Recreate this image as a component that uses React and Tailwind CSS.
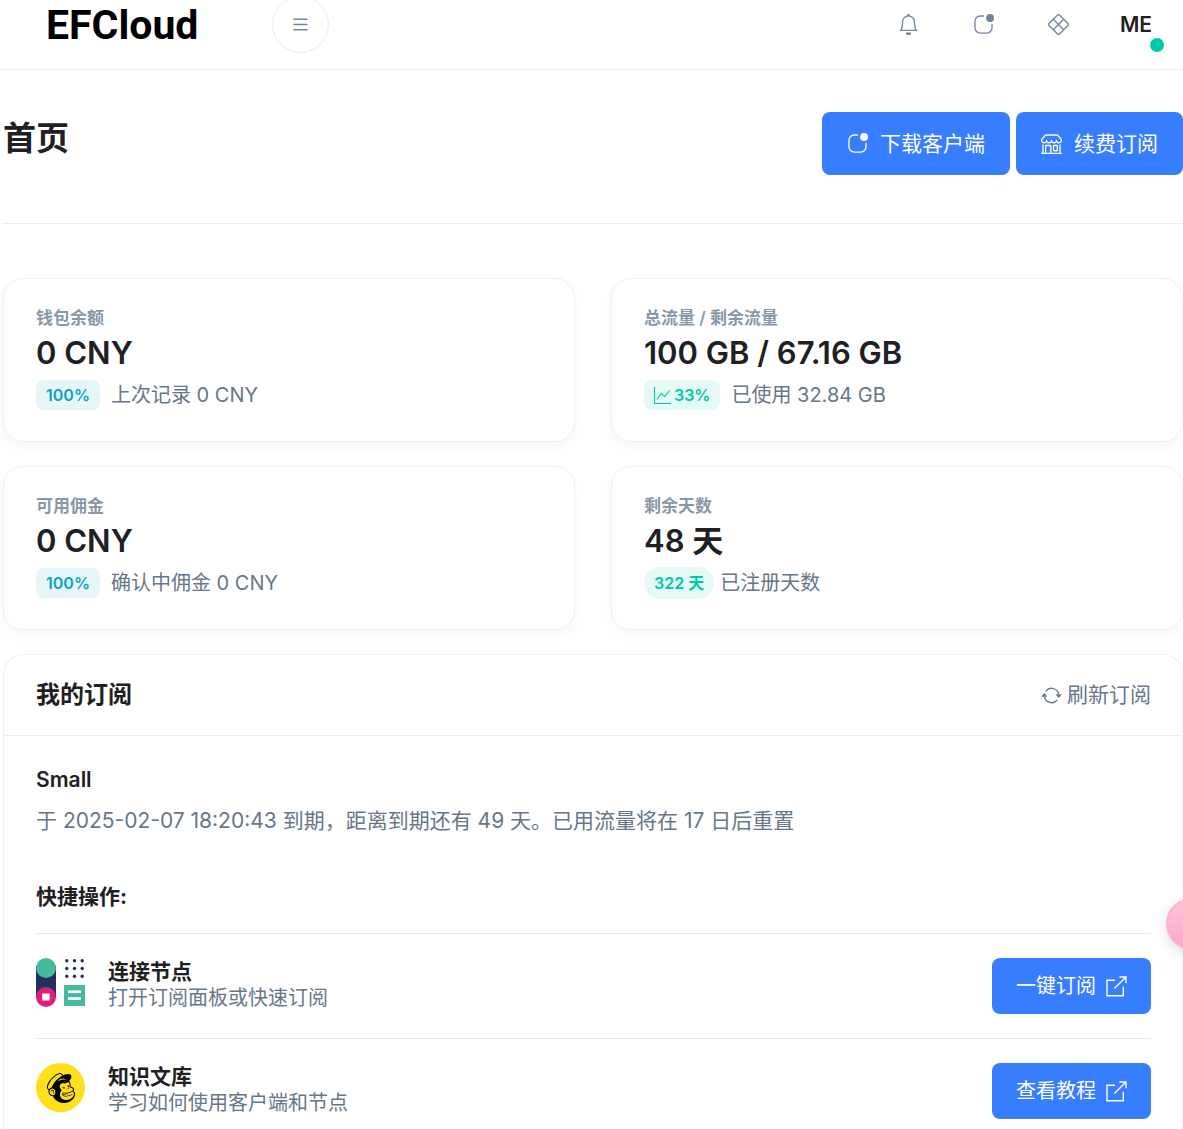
import React from "react";
import {
  BsAppIndicator,
  BsArrowRepeat,
  BsBell,
  BsGraphUp,
  BsList,
  BsShop,
  BsXDiamond,
} from "react-icons/bs";
import { SiMailchimp } from "react-icons/si";

function Card({ label, value, children }) {
  return (
    <section className="rounded-[20px] border border-[#eeeff8] bg-white px-8 pt-[25px] pb-[31px] shadow-[0_6px_16px_rgba(0,0,0,0.035)]">
      <h2 className="text-[17px] leading-7 font-semibold text-[#8898a9]">{label}</h2>
      <p className="text-[31px] leading-[42px] font-semibold">{value}</p>
      <div className="mt-[6px] flex h-[30px] items-center text-[20px] leading-[30px] text-[#677788]">{children}</div>
    </section>
  );
}

function Badge({ className, children }) {
  return (
    <span className={"flex items-center gap-[3px] px-[10px] text-[16px] font-semibold " + className}>{children}</span>
  );
}

function OpenIcon() {
  return (
    <svg viewBox="0 0 21 21" className="size-[21px]" fill="none" stroke="currentColor" strokeWidth="1.4" aria-hidden="true">
      <path d="M9 4.2H1V19.8h16.3v-9" />
      <path d="M8.4 12.4 20 1M13.4 1H20v6.2" />
    </svg>
  );
}

function PanelLogo() {
  const dots = [2.8, 10.5, 18.2];
  return (
    <svg viewBox="0 0 49 49" className="size-[49px] shrink-0" aria-hidden="true">
      <rect x="0" y="8" width="20" height="32" fill="#21305f" />
      <circle cx="10" cy="10" r="10" fill="#45ba9d" />
      <circle cx="10" cy="39" r="10" fill="#e01e79" />
      <rect x="6.2" y="35.5" width="7.4" height="7" fill="#fff" />
      {dots.map((y) =>
        dots.map((x) => <circle key={x + "-" + y} cx={x + 28} cy={y} r="1.7" fill="#21305f" />)
      )}
      <rect x="28" y="27" width="21" height="21" fill="#45ba9d" />
      <rect x="32" y="32.4" width="13" height="2.7" fill="#fff" />
      <rect x="32" y="39.2" width="13" height="2.7" fill="#fff" />
    </svg>
  );
}

function ActionRow({ logo, title, text, action }) {
  return (
    <li className="flex items-start justify-between border-t border-[#e7e9f3] py-6">
      <div className="flex items-start gap-[23px]">
        {logo}
        <div>
          <h4 className="text-[21px] leading-[27px] font-bold">{title}</h4>
          <p className="text-[20px] leading-[26px] text-[#677788]">{text}</p>
        </div>
      </div>
      <a href="#" className="flex h-14 items-center gap-[10px] rounded-lg bg-[#377dff] px-6 text-[20px] text-white">
        {action}
        <OpenIcon />
      </a>
    </li>
  );
}

export default function App() {
  return (
    <div className="flex min-h-screen flex-col bg-white font-['Inter','Noto_Sans_CJK_SC',sans-serif] text-[#1e2022]">
      <header className="flex h-[70px] items-center border-b border-[#ebecf5] pr-[31px] pb-5 pl-[46px]">
        <a href="#" className="w-[226px] font-['Roboto',sans-serif] text-[41px] leading-[48px] font-bold text-black">
          EFCloud
        </a>
        <button aria-label="菜单" className="flex size-[57px] shrink-0 items-center justify-center rounded-full border border-[#ebecf5] text-[#71869d]">
          <BsList className="size-[21px]" />
        </button>
        <nav className="ml-auto flex items-center gap-[51px]">
          <div className="flex items-center gap-[54px] text-[#71869d]">
            <button aria-label="通知"><BsBell className="size-[21px]" /></button>
            <button aria-label="客户端"><BsAppIndicator className="size-[21px]" /></button>
            <button aria-label="应用"><BsXDiamond className="size-[21px]" /></button>
          </div>
          <button className="relative text-[21px] leading-[30px] font-semibold">
            ME
            <span className="absolute -right-3 -bottom-3 size-[14px] rounded-full bg-[#00c9a7]" />
          </button>
        </nav>
      </header>

      <main className="flex grow flex-col pl-[3px]">
        <div className="flex items-start justify-between border-b border-[#ebecf5] pt-[42px] pb-12">
          <h1 className="text-[33px] leading-[52px] font-bold">首页</h1>
          <div className="flex gap-[6px] text-[21px] text-white">
            <a href="#" className="flex h-[63px] items-center gap-3 rounded-lg bg-[#377dff] px-[25px]">
              <BsAppIndicator className="size-[21px]" />
              下载客户端
            </a>
            <a href="#" className="flex h-[63px] items-center gap-3 rounded-lg bg-[#377dff] px-[25px]">
              <BsShop className="size-[21px]" />
              续费订阅
            </a>
          </div>
        </div>

        <div className="mt-[54px] grid grid-cols-2 gap-x-9 gap-y-6">
          <Card label="钱包余额" value="0 CNY">
            <Badge className="mr-[11px] h-[30px] rounded-lg bg-[#e6f5f8] text-[#09a5be]">100%</Badge>
            上次记录 0 CNY
          </Card>
          <Card label="总流量 / 剩余流量" value="100 GB / 67.16 GB">
            <Badge className="mr-[11px] h-[30px] rounded-lg bg-[#e5f9f6] text-[#00c9a7]">
              <BsGraphUp className="size-[17px]" />
              33%
            </Badge>
            已使用 32.84 GB
          </Card>
          <Card label="可用佣金" value="0 CNY">
            <Badge className="mr-[11px] h-[30px] rounded-lg bg-[#e6f5f8] text-[#09a5be]">100%</Badge>
            确认中佣金 0 CNY
          </Card>
          <Card label="剩余天数" value="48 天">
            <Badge className="mr-[6px] h-8 rounded-full bg-[#e5f9f6] text-[#00c9a7]">322 天</Badge>
            已注册天数
          </Card>
        </div>

        <section className="mt-6 grow rounded-t-[20px] border border-b-0 border-[#eeeff8] bg-white">
          <div className="flex h-[81px] items-center justify-between border-b border-[#ebecf5] pr-[31px] pl-8">
            <h2 className="text-[24px] font-bold">我的订阅</h2>
            <button className="flex items-center gap-[5px] text-[21px] text-[#677788]">
              <BsArrowRepeat className="size-[21px]" />
              刷新订阅
            </button>
          </div>
          <div className="pt-7 pr-[31px] pl-8">
            <h3 className="text-[21px] leading-8 font-semibold">Small</h3>
            <p className="mt-2 text-[21px] leading-[34px] text-[#677788]">
              于 2025-02-07 18:20:43 到期，距离到期还有 49 天。已用流量将在 17 日后重置
            </p>
            <h3 className="mt-[43px] text-[21px] leading-8 font-bold">快捷操作:</h3>
            <ul className="mt-5">
              <ActionRow logo={<PanelLogo />} title="连接节点" text="打开订阅面板或快速订阅" action="一键订阅" />
              <ActionRow
                logo={
                  <span className="flex size-[49px] shrink-0 items-center justify-center rounded-full bg-[#ffe01b] text-black">
                    <SiMailchimp className="size-[30px]" />
                  </span>
                }
                title="知识文库"
                text="学习如何使用客户端和节点"
                action="查看教程"
              />
            </ul>
          </div>
        </section>
      </main>

      <button aria-label="在线客服" className="fixed top-[898px] -right-[35px] size-[52px] rounded-full border-2 border-[#fbb3cf] bg-linear-to-b from-[#ffc4da] to-[#f9a8c8] shadow-[0_4px_14px_rgba(0,0,0,0.13)]" />
    </div>
  );
}
